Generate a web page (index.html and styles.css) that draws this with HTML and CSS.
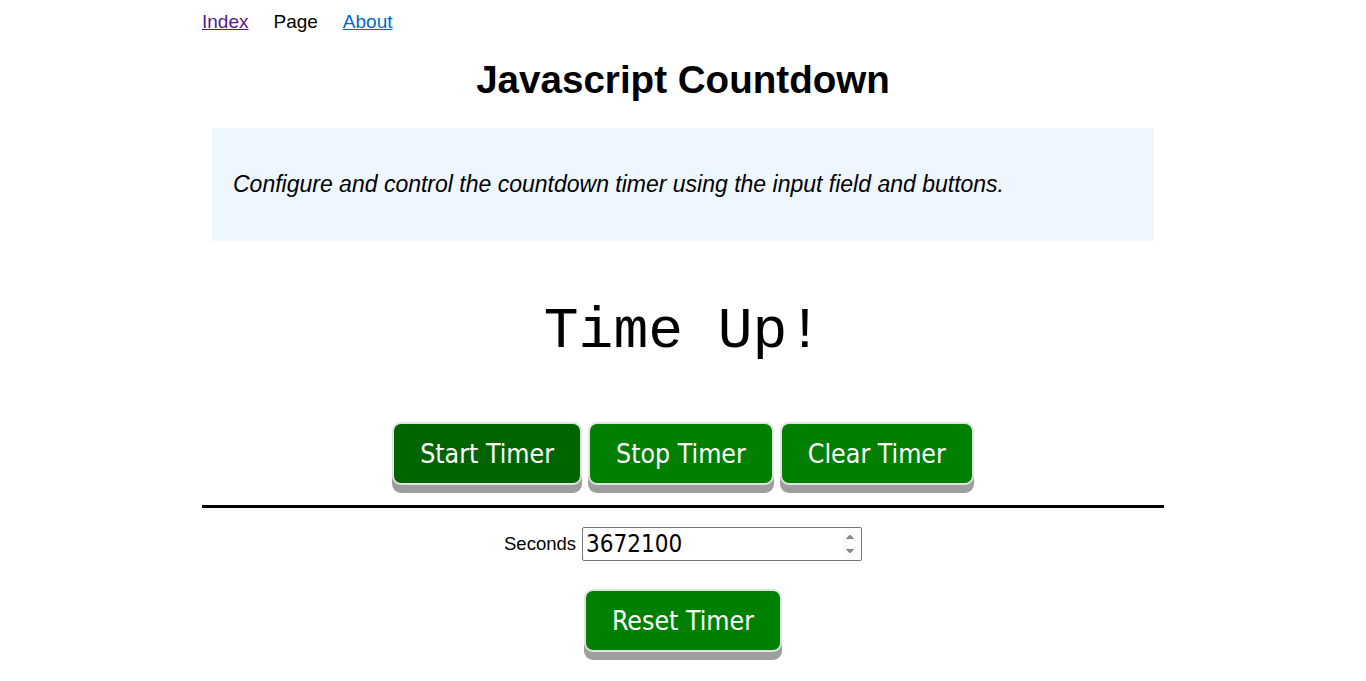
FILE: index.html
```html
<!DOCTYPE html>
<html lang="en">
<head>
<meta charset="utf-8">
<title>Javascript Countdown</title>
<link rel="stylesheet" href="styles.css">
</head>
<body>
<div class="page">
  <nav class="nav">
    <a href="#" class="visited">Index</a>
    <span>Page</span>
    <a href="#">About</a>
  </nav>
  <h1 class="title">Javascript Countdown</h1>
  <div class="intro">
    <p>Configure and control the countdown timer using the input field and buttons.</p>
  </div>
  <div class="display">Time Up!</div>
  <div class="controls">
    <button class="btn btn-active">Start Timer</button>
    <button class="btn">Stop Timer</button>
    <button class="btn">Clear Timer</button>
  </div>
  <hr class="rule">
  <div class="field">
    <label for="secs">Seconds</label>
    <input id="secs" class="secs" type="number" value="3672100">
  </div>
  <div class="reset-row">
    <button class="btn">Reset Timer</button>
  </div>
</div>
</body>
</html>
```
FILE: styles.css
```css
html, body {
  margin: 0;
  padding: 0;
  background: #fff;
}
body {
  font-family: "Liberation Sans", Arial, sans-serif;
  color: #000;
}
.page {
  width: 962px;
  margin: 0 auto;
  padding-bottom: 20px;
}
.nav {
  display: flex;
  gap: 25px;
  padding-top: 11px;
  font-size: 19px;
  line-height: 22px;
}
.nav a {
  color: #0066cc;
}
.nav a.visited {
  color: #551a8b;
}
.title {
  margin: 20px 0 0;
  text-align: center;
  font-size: 38.6px;
  line-height: 54px;
  font-weight: bold;
}
.intro {
  margin: 21px 10px 0;
  background: #eef6ff;
  height: 113px;
  padding: 0 21px;
  display: flex;
  align-items: center;
}
.intro p {
  margin: 0;
  font-style: italic;
  font-size: 23px;
}
.display {
  margin-top: 59px;
  text-align: center;
  font-family: "Liberation Mono", "Courier New", monospace;
  font-size: 58px;
  line-height: 64px;
}
.controls {
  margin-top: 58px;
  display: flex;
  justify-content: center;
  gap: 6px;
}
.btn {
  font-family: "DejaVu Sans Condensed", "DejaVu Sans", sans-serif;
  font-size: 26.5px;
  color: #fff;
  background: #008000;
  border: 2px solid #e2e2e2;
  border-radius: 9px;
  padding: 0 26px;
  height: 63px;
  box-shadow: 0 8px 0 #9e9e9e;
  cursor: pointer;
}
.btn-active {
  background: #006400;
}
.rule {
  margin: 20px 0 0;
  border: 0;
  border-top: 3px solid #000;
  height: 0;
}
.field {
  margin-top: 19px;
  display: flex;
  justify-content: center;
  align-items: center;
  gap: 6px;
}
.field label {
  font-size: 18.5px;
}
.secs {
  width: 280px;
  height: 34px;
  box-sizing: border-box;
  border: 1px solid #767676;
  border-radius: 2px;
  padding: 0 3px;
  font-family: "DejaVu Sans Condensed", "DejaVu Sans", sans-serif;
  font-size: 24px;
}
.secs::-webkit-inner-spin-button {
  opacity: 1;
  background: #e8e8ee;
}
.reset-row {
  margin-top: 28px;
  display: flex;
  justify-content: center;
}
```
